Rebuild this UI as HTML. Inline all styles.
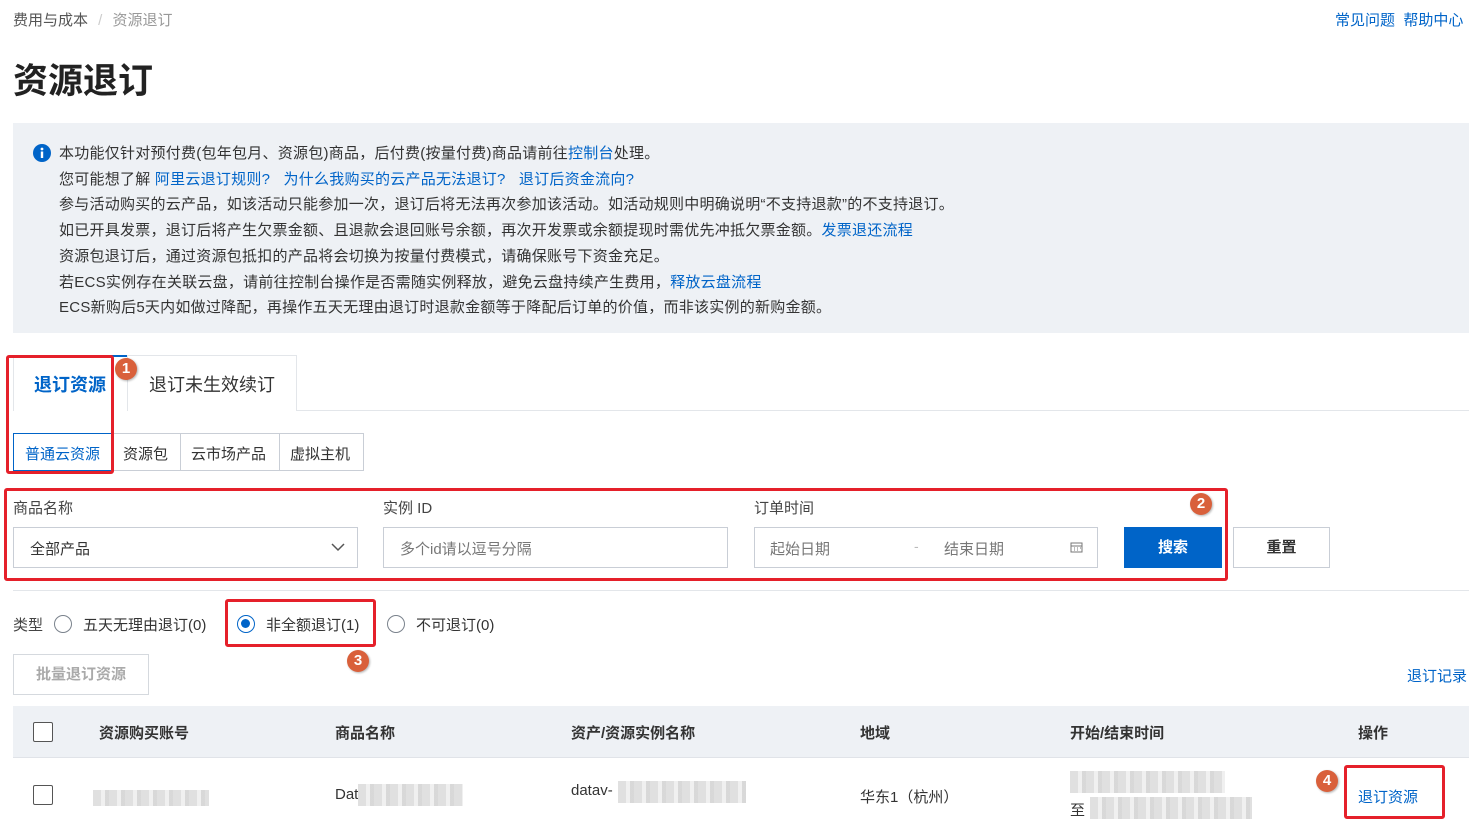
<!DOCTYPE html>
<html><head><meta charset="utf-8"><style>
*{margin:0;padding:0;box-sizing:border-box}
body{width:1469px;height:831px;overflow:hidden;background:#fff;font-family:"Liberation Sans","Noto Sans CJK SC",sans-serif;color:#333;position:relative;font-size:14px}
.a{position:absolute;white-space:nowrap}
.blue{color:#0064c8}
.red{position:absolute;border:3px solid #e5202a;border-radius:3px}
.badge{position:absolute;width:22px;height:22px;border-radius:50%;background:#d9603b;color:#fff;font-weight:bold;font-size:15px;text-align:center;line-height:22px;box-shadow:1px 1px 2px rgba(0,0,0,.3)}
.box{position:absolute;border:1px solid #c9ced6;background:#fff}
.ph{color:#777;font-size:15px}
.radio{position:absolute;width:18px;height:18px;border:1.5px solid #7a828c;border-radius:50%;background:#fff}
.blur{position:absolute;background:repeating-linear-gradient(90deg,#d8d8d8 0 8px,#ececec 8px 12px,#cfcfcf 12px 16px);opacity:.8}
</style></head><body>
<div class="a" style="left:13px;top:9px;color:#555;font-size:15px">费用与成本 <span style="color:#ccc;margin:0 6px">/</span> <span style="color:#999">资源退订</span></div>
<div class="a blue" style="left:1335px;top:9px;font-size:15px">常见问题&nbsp;&nbsp;帮助中心</div>
<div class="a" style="left:13px;top:53px;font-size:35px;font-weight:bold;color:#222">资源退订</div>

<div class="a" style="left:13px;top:123px;width:1456px;height:210px;background:#eef1f5"></div>
<svg class="a" style="left:33px;top:144px" width="18" height="18" viewBox="0 0 18 18"><circle cx="9" cy="9" r="9" fill="#0064c8"/><circle cx="9" cy="5" r="1.4" fill="#fff"/><rect x="7.8" y="7.5" width="2.4" height="6.5" fill="#fff"/></svg>
<div class="a" style="left:59px;top:141px;line-height:25.7px;font-size:15px;letter-spacing:0.25px;color:#333">
本功能仅针对预付费(包年包月、资源包)商品，后付费(按量付费)商品请前往<span class="blue">控制台</span>处理。<br>
您可能想了解 <span class="blue">阿里云退订规则?&nbsp;&nbsp;&nbsp;为什么我购买的云产品无法退订?&nbsp;&nbsp;&nbsp;退订后资金流向?</span><br>
参与活动购买的云产品，如该活动只能参加一次，退订后将无法再次参加该活动。如活动规则中明确说明“不支持退款”的不支持退订。<br>
如已开具发票，退订后将产生欠票金额、且退款会退回账号余额，再次开发票或余额提现时需优先冲抵欠票金额。<span class="blue">发票退还流程</span><br>
资源包退订后，通过资源包抵扣的产品将会切换为按量付费模式，请确保账号下资金充足。<br>
若ECS实例存在关联云盘，请前往控制台操作是否需随实例释放，避免云盘持续产生费用，<span class="blue">释放云盘流程</span><br>
ECS新购后5天内如做过降配，再操作五天无理由退订时退款金额等于降配后订单的价值，而非该实例的新购金额。</div>

<div class="a" style="left:13px;top:410px;width:1456px;height:1px;background:#e3e6ea"></div>
<div class="a" style="left:13px;top:355px;width:114px;height:56px;border-top:2px solid #0064c8;border-left:1px solid #e3e6ea;background:#fff"></div>
<div class="a" style="left:127px;top:355px;width:170px;height:56px;border:1px solid #e3e6ea;border-bottom:none;background:#fff"></div>
<div class="a blue" style="left:34px;top:371px;font-size:18px;font-weight:bold">退订资源</div>
<div class="a" style="left:149px;top:371px;font-size:18px;color:#333">退订未生效续订</div>

<div class="box" style="left:13px;top:433px;width:100px;height:38px;border-color:#0064c8"></div>
<div class="box" style="left:112px;top:433px;width:69px;height:38px"></div>
<div class="box" style="left:180px;top:433px;width:100px;height:38px"></div>
<div class="box" style="left:279px;top:433px;width:85px;height:38px"></div>
<div class="a blue" style="left:25px;top:443px;font-size:15px">普通云资源</div>
<div class="a" style="left:123px;top:443px;font-size:15px">资源包</div>
<div class="a" style="left:191px;top:443px;font-size:15px">云市场产品</div>
<div class="a" style="left:290px;top:443px;font-size:15px">虚拟主机</div>
<div class="red" style="left:6px;top:355px;width:108px;height:119px"></div>
<div class="badge" style="left:115px;top:358px">1</div>

<div class="a" style="left:13px;top:497px;font-size:15px;color:#444">商品名称</div>
<div class="a" style="left:383px;top:497px;font-size:15px;color:#444">实例 ID</div>
<div class="a" style="left:754px;top:497px;font-size:15px;color:#444">订单时间</div>
<div class="box" style="left:13px;top:527px;width:345px;height:41px"></div>
<div class="a" style="left:30px;top:538px;font-size:15px;color:#333">全部产品</div>
<svg class="a" style="left:330px;top:541px" width="16" height="12"><path d="M2 3l6 6 6-6" stroke="#555" stroke-width="1.5" fill="none"/></svg>
<div class="box" style="left:383px;top:527px;width:345px;height:41px"></div>
<div class="a ph" style="left:400px;top:538px">多个id请以逗号分隔</div>
<div class="box" style="left:754px;top:527px;width:344px;height:41px"></div>
<div class="a ph" style="left:770px;top:538px">起始日期</div>
<div class="a" style="left:914px;top:538px;color:#bbb">-</div>
<div class="a ph" style="left:944px;top:538px">结束日期</div>
<svg class="a" style="left:1070px;top:541px" width="13" height="12"><rect x="1" y="2" width="11" height="9" stroke="#777" fill="none"/><path d="M1 5h11M4 7h1M7 7h1M10 7h1M4 9h1M7 9h1" stroke="#777"/></svg>
<div class="a" style="left:1124px;top:527px;width:98px;height:41px;background:#0064c8;color:#fff;font-weight:bold;font-size:15px;text-align:center;line-height:41px">搜索</div>
<div class="box" style="left:1233px;top:527px;width:97px;height:41px;text-align:center;line-height:39px;font-weight:bold;font-size:15px;color:#333">重置</div>
<div class="red" style="left:4px;top:488px;width:1224px;height:93px"></div>
<div class="badge" style="left:1190px;top:493px">2</div>
<div class="a" style="left:13px;top:590px;width:1456px;height:1px;background:#e3e6ea"></div>

<div class="a" style="left:13px;top:614px;font-size:15px;color:#444">类型</div>
<div class="radio" style="left:54px;top:615px"></div>
<div class="a" style="left:83px;top:614px;font-size:15px">五天无理由退订(0)</div>
<div class="radio" style="left:237px;top:615px;border:1.5px solid #0064c8"><div style="position:absolute;left:3px;top:3px;width:9px;height:9px;border-radius:50%;background:#0064c8"></div></div>
<div class="a" style="left:266px;top:614px;font-size:15px">非全额退订(1)</div>
<div class="radio" style="left:387px;top:615px"></div>
<div class="a" style="left:416px;top:614px;font-size:15px">不可退订(0)</div>
<div class="red" style="left:225px;top:599px;width:151px;height:48px"></div>
<div class="badge" style="left:347px;top:650px">3</div>

<div class="box" style="left:13px;top:654px;width:136px;height:41px;border-color:#d5d9de;color:#aaa;font-weight:bold;font-size:15px;text-align:center;line-height:39px">批量退订资源</div>
<div class="a blue" style="left:1407px;top:665px;font-size:15px">退订记录</div>

<div class="a" style="left:13px;top:706px;width:1456px;height:52px;background:#eef1f5;border-bottom:1px solid #e0e3e8"></div>
<div class="a" style="left:33px;top:722px;width:20px;height:20px;border:1.5px solid #555;background:#fff;border-radius:2px"></div>
<div class="a" style="left:99px;top:722px;font-size:15px;font-weight:bold;color:#333">资源购买账号</div>
<div class="a" style="left:335px;top:722px;font-size:15px;font-weight:bold;color:#333">商品名称</div>
<div class="a" style="left:571px;top:722px;font-size:15px;font-weight:bold;color:#333">资产/资源实例名称</div>
<div class="a" style="left:860px;top:722px;font-size:15px;font-weight:bold;color:#333">地域</div>
<div class="a" style="left:1070px;top:722px;font-size:15px;font-weight:bold;color:#333">开始/结束时间</div>
<div class="a" style="left:1358px;top:722px;font-size:15px;font-weight:bold;color:#333">操作</div>

<div class="a" style="left:33px;top:785px;width:20px;height:20px;border:1.5px solid #555;background:#fff;border-radius:2px"></div>
<div class="blur" style="left:93px;top:790px;width:116px;height:16px"></div>
<div class="a" style="left:335px;top:786px;font-size:15px">Dat</div>
<div class="blur" style="left:358px;top:784px;width:105px;height:22px"></div>
<div class="a" style="left:571px;top:782px;font-size:15px">datav-</div>
<div class="blur" style="left:618px;top:781px;width:128px;height:22px"></div>
<div class="a" style="left:860px;top:786px;font-size:15px">华东1（杭州）</div>
<div class="blur" style="left:1070px;top:771px;width:155px;height:22px"></div>
<div class="a" style="left:1070px;top:799px;font-size:15px">至</div>
<div class="blur" style="left:1090px;top:797px;width:162px;height:22px"></div>
<div class="a blue" style="left:1358px;top:786px;font-size:15px">退订资源</div>
<div class="red" style="left:1344px;top:765px;width:101px;height:54px"></div>
<div class="badge" style="left:1316px;top:770px">4</div>
</body></html>
